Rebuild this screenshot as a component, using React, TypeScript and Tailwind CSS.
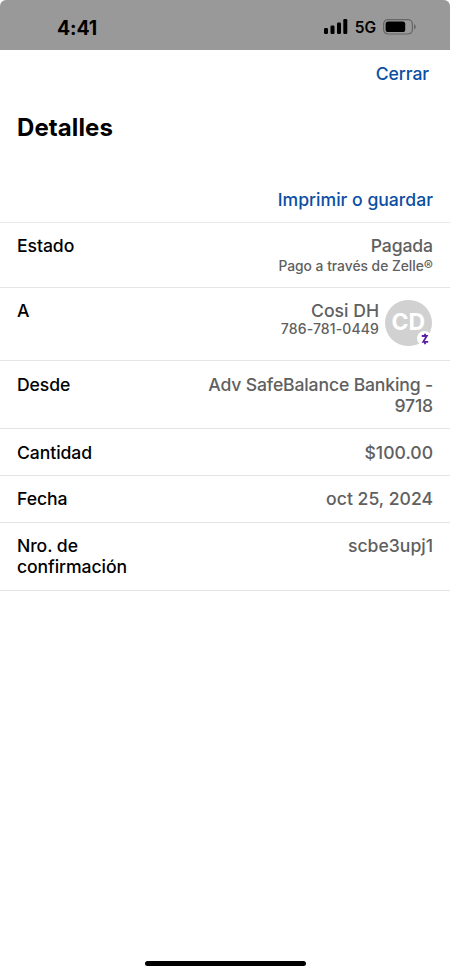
import type { ReactNode } from 'react';

interface RowProps {
  label: ReactNode;
  className: string;
  children: ReactNode;
}

function DetailRow({ label, className, children }: RowProps) {
  return (
    <div
      className={`flex items-start justify-between border-b border-[#e4e4e4] px-[17px] text-[17.6px] leading-[21px] font-medium ${className}`}
    >
      <div className="w-[140px] tracking-[-0.08px] text-black">{label}</div>
      <div className="text-right text-[#606060]">{children}</div>
    </div>
  );
}

function StatusBar() {
  return (
    <div className="h-[50px] bg-white">
      <div className="flex h-full items-center justify-between rounded-t-[6px] bg-[#999999] pt-[4px] pl-[57px] pr-[34px] text-black">
        <span className="pt-px text-[19.5px] leading-[24px] font-bold tracking-[-0.1px]">4:41</span>
        <div className="flex items-center">
          <svg className="mb-px" width="24" height="15" viewBox="0 0 24 15">
            <rect x="0" y="9" width="4" height="6" rx="1.2" />
            <rect x="6.5" y="6.5" width="4" height="8.5" rx="1.2" />
            <rect x="13" y="3.5" width="4" height="11.5" rx="1.2" />
            <rect x="19.3" y="0" width="4" height="15" rx="1.2" />
          </svg>
          <span className="ml-[7px] pt-[2px] text-[15.5px] leading-[20px] font-semibold">5G</span>
          <svg className="ml-[7px]" width="33" height="16" viewBox="0 0 33 16">
            <rect x="0.6" y="0.6" width="28.8" height="14.4" rx="4.4" fill="none" stroke="#666666" strokeWidth="1.2" />
            <rect x="2.6" y="2.6" width="19.6" height="10.4" rx="2.6" />
            <path d="M31 5.3c1.3.5 1.8 1.4 1.8 2.5s-.5 2-1.8 2.5z" fill="#666666" />
          </svg>
        </div>
      </div>
    </div>
  );
}

function Avatar() {
  return (
    <div className="relative -mt-[0.5px] flex size-[46.5px] items-center justify-center rounded-full bg-[#d1d1d1]">
      <span className="text-[23px] leading-none font-bold text-white">CD</span>
      {/* Zelle badge */}
      <div className="absolute -right-[0.5px] bottom-0 flex size-[15px] items-center justify-center rounded-full bg-white">
        <svg width="8" height="12" viewBox="0 0 8 12" fill="none" stroke="#5b1fa6" strokeWidth="1.8">
          <path d="M0.8 3H5.8L2.2 8.8H7.2" />
          <path d="M4 0.8V3M4 8.8V11.2" />
        </svg>
      </div>
    </div>
  );
}

export default function App() {
  return (
    <div className="flex h-[975px] w-[450px] flex-col overflow-hidden bg-white font-['Inter','Liberation_Sans',sans-serif]">
      <StatusBar />

      <div className="flex justify-end pt-[13px] pr-[21px]">
        <button className="text-[17.6px] leading-[22px] font-medium tracking-[-0.1px] text-[#0b4ea2]">Cerrar</button>
      </div>

      <h1 className="mt-[28px] pl-[17px] text-[24px] leading-[30px] font-bold tracking-[0.1px] text-black">Detalles</h1>

      <div className="flex h-[80px] items-end justify-end border-b border-[#e9e9e9] pr-[17px] pb-[11px]">
        <button className="text-[17.6px] leading-[22px] font-medium text-[#0b4ea2]">Imprimir o guardar</button>
      </div>

      <DetailRow label="Estado" className="h-[65px] pt-[12px]">
        <div className="tracking-[-0.1px]">Pagada</div>
        <div className="pt-px text-[13.8px] leading-[19px]">Pago a través de Zelle®</div>
      </DetailRow>
      <DetailRow label="A" className="h-[73px] pt-[12px]">
        <div className="flex gap-[6px] pr-[1.5px]">
          <div>
            <div>Cosi DH</div>
            <div className="text-[14px] leading-[16px] tracking-[0.12px]">786-781-0449</div>
          </div>
          <Avatar />
        </div>
      </DetailRow>
      <DetailRow label="Desde" className="h-[68px] pt-[13px]">
        <span className="tracking-[-0.15px]">
          Adv SafeBalance Banking -
          <br />
          9718
        </span>
      </DetailRow>
      <DetailRow label="Cantidad" className="h-[47px] pt-[13px]">
        $100.00
      </DetailRow>
      <DetailRow label="Fecha" className="h-[47px] pt-[12px]">
        oct 25, 2024
      </DetailRow>
      <DetailRow
        label={
          <>
            Nro. de
            <br />
            confirmación
          </>
        }
        className="h-[68px] pt-[12px]"
      >
        scbe3upj1
      </DetailRow>

      {/* home indicator */}
      <div className="mt-auto mb-[9px] h-[5px] w-[161px] self-center rounded-full bg-black" />
    </div>
  );
}
